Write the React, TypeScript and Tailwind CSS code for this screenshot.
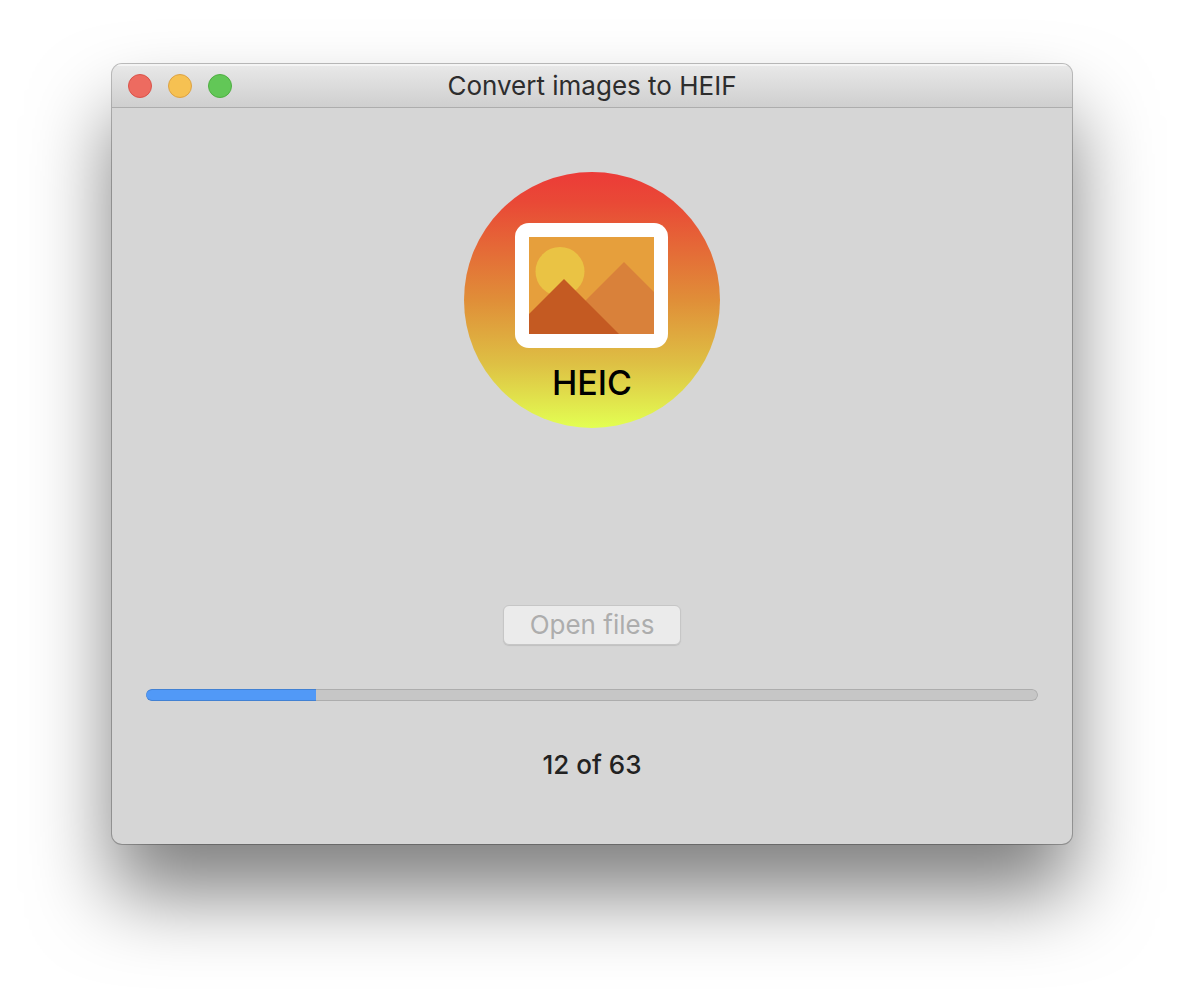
import React from "react";

function TitleBar({ title }: { title: string }) {
  return (
    <header className="grid h-11 grid-cols-[1fr_auto_1fr] items-center border-b border-[#adadad] bg-linear-to-b from-[#e9e9e9] to-[#cfcfcf] px-4 shadow-[inset_0_2px_0_#f4f4f4]">
      <div className="flex gap-4">
        <button type="button" aria-label="Close" className="size-6 rounded-full border border-[#d9534a] bg-[#ed6b60]" />
        <button type="button" aria-label="Minimize" className="size-6 rounded-full border border-[#dca244] bg-[#f6c152]" />
        <button type="button" aria-label="Zoom" className="size-6 rounded-full border border-[#4fae42] bg-[#62c757]" />
      </div>
      <h1 className="text-[26px] leading-8 text-[#2d2d2d]">{title}</h1>
    </header>
  );
}

function AppIcon() {
  return (
    <svg viewBox="0 0 256 256" className="size-64" role="img" aria-label="HEIC">
      <defs>
        <linearGradient id="disc" x1="0" y1="0" x2="0" y2="1">
          <stop offset="0" stopColor="#ec3b38" />
          <stop offset="0.12" stopColor="#e94936" />
          <stop offset="0.5" stopColor="#e08e38" />
          <stop offset="0.75" stopColor="#dec044" />
          <stop offset="1" stopColor="#e3ff52" />
        </linearGradient>
        <clipPath id="photo">
          <rect x="65" y="65" width="125" height="97" />
        </clipPath>
      </defs>
      <circle cx="128" cy="128" r="128" fill="url(#disc)" />
      <rect x="51" y="51" width="153" height="125" rx="14" fill="#fff" />
      <g clipPath="url(#photo)">
        <rect x="65" y="65" width="125" height="97" fill="#e69f3c" />
        <circle cx="96" cy="99.500" r="24.500" fill="#eac344" />
        <path d="M160 90 L80 170 H240 Z" fill="#d9813a" />
        <path d="M100 107 L37 170 H163 Z" fill="#c45a22" />
      </g>
      <text x="128" y="223" textAnchor="middle" fontSize="34" fontWeight="500" fill="#000">
        HEIC
      </text>
    </svg>
  );
}

export default function App() {
  const done = 12;
  const total = 63;
  return (
    <div className="min-h-screen bg-white px-28 py-16 font-['Inter',sans-serif]">
      <main className="overflow-hidden rounded-[10px] bg-[#d6d6d6] shadow-[0_0_0_1px_rgba(0,0,0,0.25),0_50px_80px_rgba(0,0,0,0.5)]">
        <TitleBar title="Convert images to HEIF" />
        <div className="flex flex-col items-center px-8.5 pt-16 pb-[63px]">
          <AppIcon />
          <button
            type="button"
            disabled
            className="mt-[177px] h-10 rounded-md border border-[#c6c6c6] bg-[#ebebeb] px-[26px] text-[26px] leading-8 text-[#adadad] shadow-[0_1px_1px_#c0c0c0]"
          >
            Open files
          </button>
          <progress
            id="conversion"
            value={done}
            max={total}
            className="mt-11 h-3 w-full appearance-none overflow-hidden rounded-full [&::-webkit-progress-bar]:rounded-full [&::-webkit-progress-bar]:bg-[#c6c6c6] [&::-webkit-progress-bar]:shadow-[inset_0_0_0_1px_#adadad] [&::-webkit-progress-value]:rounded-l-full [&::-webkit-progress-value]:bg-[#5199f7] [&::-webkit-progress-value]:shadow-[inset_0_1px_0_#4281d3,inset_0_-1px_0_#4281d3]"
          />
          <label htmlFor="conversion" className="mt-12 text-[26px] leading-8 font-medium text-[#222]">
            {done} of {total}
          </label>
        </div>
      </main>
    </div>
  );
}
